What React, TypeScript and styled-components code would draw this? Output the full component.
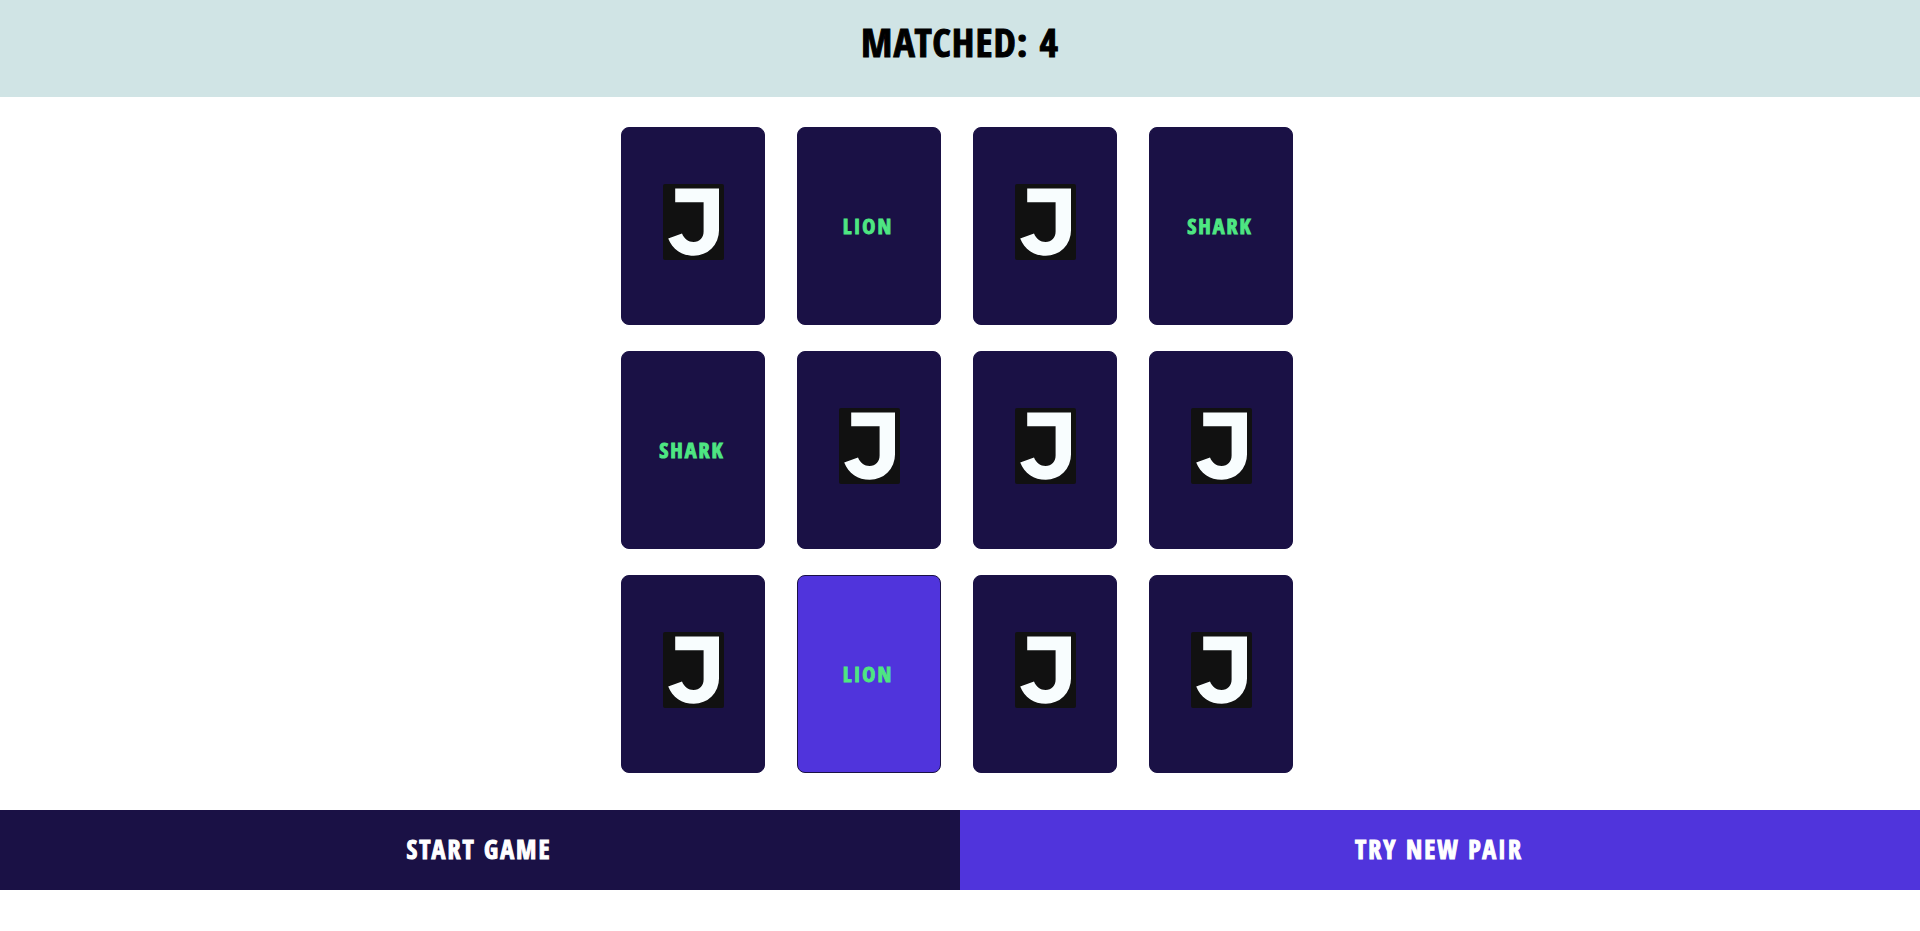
import React from 'react';
import styled, { createGlobalStyle } from 'styled-components';

const colors = {
  mist: '#d0e4e5',
  navy: '#1a1145',
  violet: '#5034dc',
  green: '#4ee682',
};

const GlobalStyle = createGlobalStyle`
  *, *::before, *::after { box-sizing: border-box; }
  body {
    margin: 0;
    background: #fff;
    font-family: 'Open Sans Condensed', 'Roboto Condensed', 'Open Sans', sans-serif;
    font-weight: 700;
    text-transform: uppercase;
    -webkit-text-stroke: 1px currentColor;
  }
  button { font: inherit; text-transform: inherit; cursor: pointer; }
`;

const Header = styled.header`
  padding: 10px 0 23px;
  background: ${colors.mist};
  text-align: center;
`;

const Score = styled.h1`
  margin: 0;
  color: #000;
  font-size: 40px;
  line-height: 64px;
  letter-spacing: 1px;
`;

const Board = styled.main`
  display: grid;
  grid-template-columns: repeat(4, 144px);
  grid-auto-rows: 198px;
  gap: 26px 32px;
  justify-content: center;
  padding: 30px 6px 37px 0;
`;

const Card = styled.button<{ $active?: boolean }>`
  display: flex;
  align-items: center;
  justify-content: center;
  padding: 0;
  border: 1px solid ${colors.navy};
  border-radius: 8px;
  background: ${(p) => (p.$active ? colors.violet : colors.navy)};
  color: ${colors.green};
`;

const CardName = styled.span`
  font-size: 22px;
  line-height: 32px;
  letter-spacing: 2px;
  padding: 0 2px 2px 0;
`;

const Mark = styled.svg`
  display: block;
  width: 61px;
  height: 76px;
  margin-bottom: 8px;
`;

const Actions = styled.footer`
  display: grid;
  grid-template-columns: 1fr 1fr;
`;

const ActionButton = styled.button<{ $accent?: boolean }>`
  height: 80px;
  padding: 0 2px 2px 0;
  border: 0;
  background: ${(p) => (p.$accent ? colors.violet : colors.navy)};
  color: #fff;
  && {
    font-size: 26px;
    line-height: 40px;
    letter-spacing: 2px;
  }
`;

const CardBack = () => (
  <Mark viewBox="0 0 61 76" aria-hidden="true">
    <rect width="61" height="76" rx="2" fill="#111" />
    <path
      d="M12.2 4.5H56V46.5A25.2 25.2 0 0 1 30.8 71.8C19 71.8 9.3 65 5.2 54.4L19 49.5C21.2 54.8 25.3 58 30.6 58C36.6 58 40.6 53.5 40.6 47.5V18.2H12.2Z"
      fill="#f8fdfe"
    />
  </Mark>
);

type CardData = { name?: string; active?: boolean };

const cards: CardData[] = [
  {}, { name: 'Lion' }, {}, { name: 'Shark' },
  { name: 'Shark' }, {}, {}, {},
  {}, { name: 'Lion', active: true }, {}, {},
];

export default function App() {
  return (
    <>
      <GlobalStyle />
      <Header>
        <Score>Matched: 4</Score>
      </Header>
      <Board>
        {cards.map((card, i) => (
          <Card key={i} type="button" $active={card.active} aria-label={card.name ?? 'Face-down card'}>
            {card.name ? <CardName>{card.name}</CardName> : <CardBack />}
          </Card>
        ))}
      </Board>
      <Actions>
        <ActionButton type="button">Start game</ActionButton>
        <ActionButton type="button" $accent>Try new pair</ActionButton>
      </Actions>
    </>
  );
}
